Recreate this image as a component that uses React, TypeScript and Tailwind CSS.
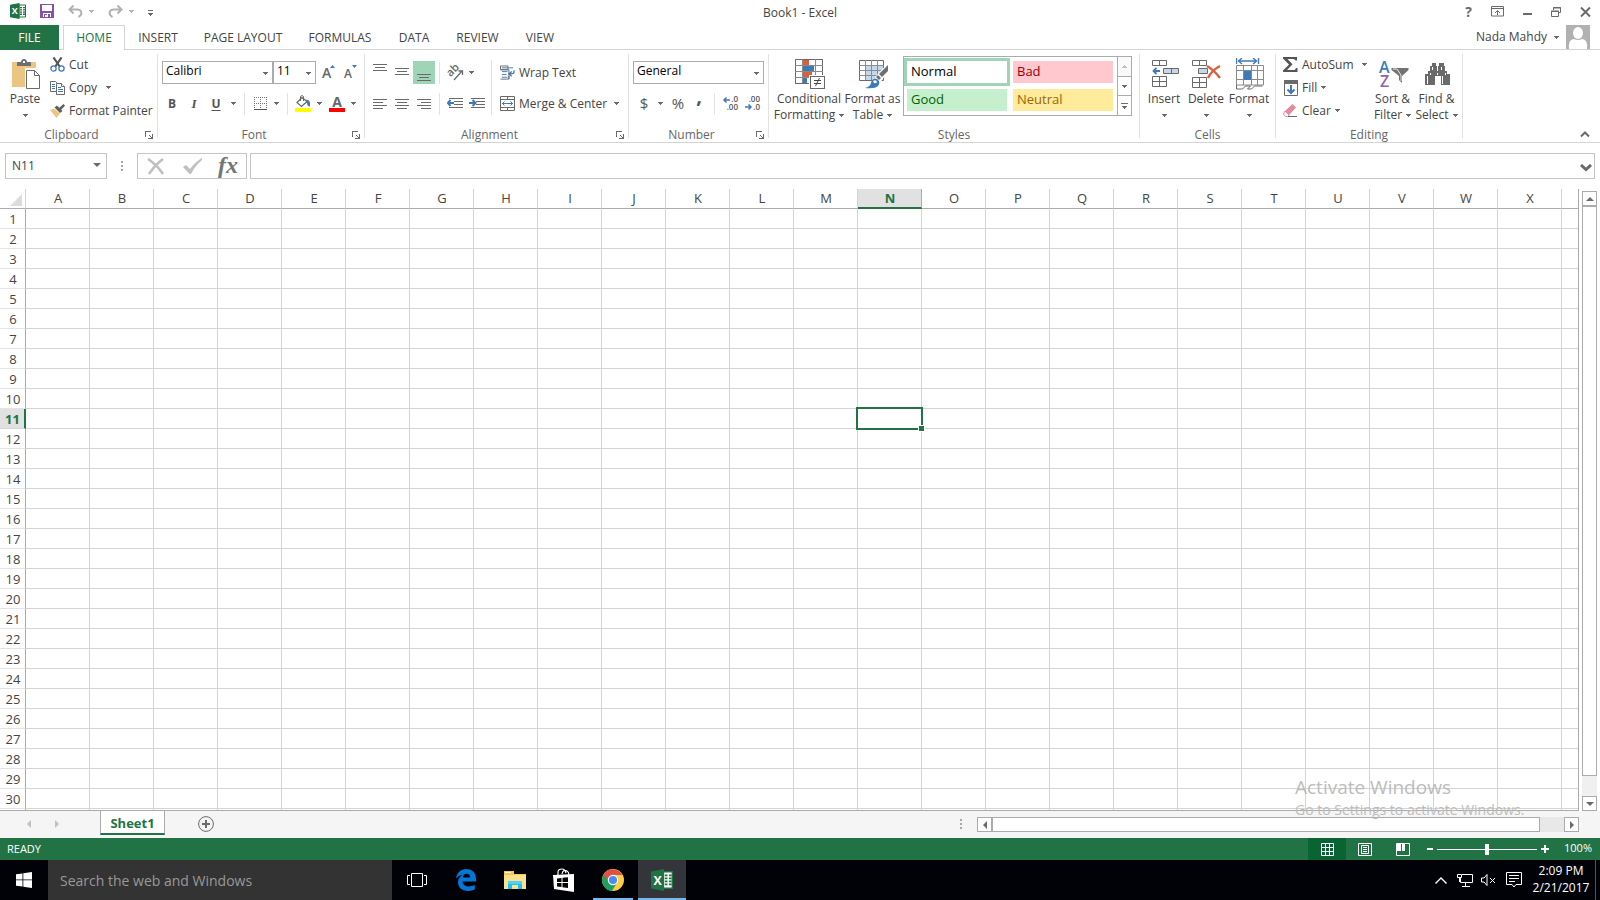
import type { ReactNode } from "react";

const GREY = "#6a6a6a";
const BLUE = "#3f7ab8";

/* ---------- shared pieces ---------- */

function Caret({ className = "" }: { className?: string }) {
  return (
    <svg width="5" height="3" viewBox="0 0 5 3" className={`shrink-0 ${className}`} shapeRendering="crispEdges" aria-hidden="true">
      <path d="M0 0h5v1h-1v1h-1v1h-1v-1h-1v-1h-1z" fill={GREY} />
    </svg>
  );
}

function Divider({ className = "h-[22px]" }: { className?: string }) {
  return <span className={`w-px shrink-0 bg-[#e1e1e1] ${className}`} />;
}

function Launcher({ label }: { label: string }) {
  return (
    <button aria-label={label} className="flex h-3 w-3 items-center justify-center">
      <svg width="8" height="8" viewBox="0 0 8 8" shapeRendering="crispEdges" fill={GREY} aria-hidden="true">
        <path d="M0 0h6v1H1v5H0zM7 3h1v5H3V7h3V6H5V5H4V4h1v1h1v1h1z" />
      </svg>
    </button>
  );
}

function Group({ name, width, launcher, children }: { name: string; width: string; launcher?: boolean; children: ReactNode }) {
  return (
    <section aria-label={name} className={`flex shrink-0 flex-col border-r border-[#e1e1e1] ${width}`}>
      <div className="flex h-[74px] shrink-0 items-start">{children}</div>
      <div className="flex h-[14px] shrink-0 items-center text-center text-[12px] leading-[14px] text-[#666]">
        <span className="flex-1">{name}</span>
        {launcher && (
          <span className="w-[14px]">
            <Launcher label={`${name} settings`} />
          </span>
        )}
      </div>
    </section>
  );
}

function BigButton({ icon, lines, width, inlineCaret }: { icon: ReactNode; lines: string[]; width: string; inlineCaret?: boolean }) {
  return (
    <button className={`flex shrink-0 flex-col items-center pt-[3px] text-[12px] leading-4 whitespace-nowrap ${width}`}>
      <span className="flex h-[34px] items-center justify-center pl-[2px]">{icon}</span>
      {lines.map((line, i) => (
        <span key={line} className="flex items-center gap-1">
          {line}
          {inlineCaret && i === lines.length - 1 && <Caret />}
        </span>
      ))}
      {!inlineCaret && (
        <span className="flex h-4 items-center">
          <Caret />
        </span>
      )}
    </button>
  );
}

function SmallButton({ icon, label, caret, caretGap = "ml-1" }: { icon: ReactNode; label: string; caret?: boolean; caretGap?: string }) {
  return (
    <button className="flex h-[23px] items-center text-[12px] whitespace-nowrap">
      <span className="mr-1 flex w-[15px] shrink-0 justify-center">{icon}</span>
      {label}
      {caret && <Caret className={caretGap} />}
    </button>
  );
}

function Tool({ label, width = "w-[22px]", active, children }: { label: string; width?: string; active?: boolean; children: ReactNode }) {
  return (
    <button aria-label={label} className={`flex h-[23px] shrink-0 items-center justify-center ${width} ${active ? "bg-[#9fd5b7]" : ""}`}>
      {children}
    </button>
  );
}

function Combo({ label, value, options, width }: { label: string; value: string; options: string[]; width: string }) {
  return (
    <div className={`relative h-[23px] shrink-0 border border-[#ababab] ${width}`}>
      <select aria-label={label} defaultValue={value} className="block h-full w-full appearance-none bg-transparent pb-1 pl-[3px] text-[12px] leading-[17px] text-black outline-none">
        {options.map((o) => (
          <option key={o}>{o}</option>
        ))}
      </select>
      <Caret className="pointer-events-none absolute top-[10px] right-[4px]" />
    </div>
  );
}

/* ---------- icons ---------- */

function ExcelLogo({ size }: { size: number }) {
  return (
    <svg width={size} height={size} viewBox="0 0 16 16" aria-hidden="true">
      <path d="M9 2h6.5v12H9z" fill="#fff" stroke="#217346" />
      <path d="M10 4h2v1.3h-2zM13 4h2v1.3h-2zM10 6.2h2v1.3h-2zM13 6.2h2v1.3h-2zM10 8.4h2v1.3h-2zM13 8.4h2v1.3h-2zM10 10.6h2v1.3h-2zM13 10.6h2v1.3h-2z" fill="#217346" />
      <path d="M0 1.800L9.500 0v16L0 14.200z" fill="#217346" />
      <text x="4.800" y="11.300" fontSize="9" fontWeight="700" fill="#fff" textAnchor="middle" fontFamily="Open Sans, sans-serif">X</text>
    </svg>
  );
}

function SaveIcon() {
  return (
    <svg width="14" height="14" viewBox="0 0 14 14" shapeRendering="crispEdges" aria-hidden="true">
      <path d="M0 0h14v14H0z" fill="#8652a8" />
      <path d="M2 1h10v6H2zM3 9h8v4H3z" fill="#fff" />
      <path d="M4 10h3v3H4zM8 10h2v3H8z" fill="#8652a8" />
      <path d="M5 11h2v2H5z" fill="#fff" />
    </svg>
  );
}

function UndoIcon({ flip }: { flip?: boolean }) {
  return (
    <svg width="15" height="13" viewBox="0 0 15 13" fill="none" stroke="#b1b1b1" strokeWidth="2" className={flip ? "-scale-x-100" : ""} aria-hidden="true">
      <path d="M5.500 0.500L1.500 4.500l4 4M2 4.500h7c5.500 0 5.500 5.500 1.500 7.500" />
    </svg>
  );
}

function PasteIcon() {
  return (
    <svg width="29" height="31" viewBox="0 0 29 31" aria-hidden="true">
      <path d="M0 3h24v25H0z" fill="#ecc681" />
      <path d="M5 7V3h4c0-4 6-4 6 0h4v4z" fill="#6f6f6f" />
      <path d="M11 2h2v2h-2z" fill="#fff" />
      <path d="M13 9h11l5 5v17H13z" fill="#fff" />
      <path d="M14.500 11.500h8l5 5v13h-13zM22.500 11.500v5h5" fill="#fff" stroke={GREY} />
    </svg>
  );
}

function CutIcon() {
  return (
    <svg width="15" height="15" viewBox="0 0 15 15" fill="none" aria-hidden="true">
      <path d="M3.500 0.500l6.500 9.500M11.500 0.500L5 10" stroke="#555" strokeWidth="2.200" />
      <circle cx="3.500" cy="11.500" r="2.600" stroke={BLUE} strokeWidth="1.300" />
      <circle cx="11.500" cy="11.500" r="2.600" stroke={BLUE} strokeWidth="1.300" />
    </svg>
  );
}

function CopyIcon() {
  return (
    <svg width="15" height="14" viewBox="0 0 15 14" fill="#fff" aria-hidden="true">
      <path d="M0.500 0.500h5l2 2v8h-7z" stroke={GREY} />
      <path d="M2 3.500h3M2 5.500h3M2 7.500h3" stroke={BLUE} />
      <path d="M6.500 2.500h5l3 3v8h-8z" stroke={GREY} />
      <path d="M11.500 2.500v3h3" stroke={GREY} />
      <path d="M8 6.500h3M8 8.500h5M8 10.500h5" stroke={BLUE} />
    </svg>
  );
}

function PainterIcon() {
  return (
    <svg width="15" height="14" viewBox="0 0 15 14" aria-hidden="true">
      <path d="M0 6l4-1.500 6 5L6.500 14z" fill="#ecc681" />
      <path d="M4.500 3.500L7 1.500l5.500 5.500-2.500 2z" fill="#5f5f5f" />
      <path d="M9 4l4.500-4L15 1.800 11 6z" fill="#5f5f5f" />
    </svg>
  );
}

function GrowIcon({ up }: { up?: boolean }) {
  return (
    <svg width="14" height="16" viewBox="0 0 14 16" className="overflow-visible" aria-hidden="true">
      <text x="0" y="13" fontSize={up ? 14 : 12} fontWeight="600" fill="#666" fontFamily="Open Sans, sans-serif">A</text>
      <path d={up ? "M8 3h5L10.500 0z" : "M8 0h5L10.500 3z"} fill={BLUE} />
    </svg>
  );
}

function BordersIcon() {
  return (
    <svg width="13" height="13" viewBox="0 0 13 13" aria-hidden="true">
      <path d="M0 0.500h13M0 6.500h13M0.500 0v12M6.500 0v12M12.500 0v12" stroke="#777" strokeDasharray="1 1" />
      <path d="M0 12.500h13" stroke="#555" />
    </svg>
  );
}

function BucketIcon() {
  return (
    <svg width="16" height="17" viewBox="0 0 16 17" fill="none" aria-hidden="true">
      <path d="M7 2.500L2 7.500l4.500 4L12 6.500z" stroke="#666" strokeWidth="1.200" fill="#fff" />
      <path d="M5.500 6V1.500q1.500-2 3 0V6" stroke="#666" />
      <path d="M11 4.500q5 0 4 7-3 0-3-4z" fill={BLUE} />
      <path d="M0 13h16v4H0z" fill="#ff0" />
    </svg>
  );
}

function FontColorIcon() {
  return (
    <svg width="16" height="17" viewBox="0 0 16 17" className="overflow-visible" aria-hidden="true">
      <text x="8" y="12" fontSize="14" fontWeight="700" fill="#666" textAnchor="middle" fontFamily="Open Sans, sans-serif">A</text>
      <path d="M0 13h16v4H0z" fill="#f00" />
    </svg>
  );
}

/* Each entry is [x, width] of one stroke; strokes are three pixels apart. */
function LinesIcon({ rows, top = 0, height = 13 }: { rows: [number, number][]; top?: number; height?: number }) {
  return (
    <svg width="14" height={height} viewBox={`0 0 14 ${height}`} shapeRendering="crispEdges" fill={GREY} aria-hidden="true">
      {rows.map(([x, w], i) => (
        <rect key={i} x={x} y={top + i * 3} width={w} height="1" />
      ))}
    </svg>
  );
}

const vertical: [number, number][] = [[0, 14], [2, 10], [0, 14]];
const left: [number, number][] = [[0, 14], [0, 10], [0, 14], [0, 10]];
const center: [number, number][] = [[0, 14], [2, 10], [0, 14], [2, 10]];
const right: [number, number][] = [[0, 14], [4, 10], [0, 14], [4, 10]];

function OrientIcon() {
  return (
    <svg width="17" height="16" viewBox="0 0 17 16" className="overflow-visible" aria-hidden="true">
      <text x="1" y="10" fontSize="11" fontWeight="600" fill="#666" fontFamily="Open Sans, sans-serif" transform="rotate(-45 5 8)">ab</text>
      <path d="M7 15L15 6M11.500 6H15.500V10" stroke={GREY} strokeWidth="1.300" fill="none" />
    </svg>
  );
}

function IndentIcon({ more }: { more?: boolean }) {
  return (
    <svg width="16" height="12" viewBox="0 0 16 12" aria-hidden="true">
      <path d="M2 0.500h14M7 3.500h9M7 6.500h9M2 9.500h14" stroke={GREY} shapeRendering="crispEdges" />
      <path d={more ? "M0 5h6M3.500 2L6.500 5l-3 3" : "M7 5H1M3.500 2L0.800 5l2.700 3"} stroke={BLUE} strokeWidth="2" fill="none" />
    </svg>
  );
}

function WrapIcon() {
  return (
    <svg width="16" height="16" viewBox="0 0 16 16" fill="none" aria-hidden="true">
      <path d="M0.500 0.500h8v4h-8zM0.500 4.500h9v10h-9" stroke={GREY} />
      <path d="M9.500 11v3.500" stroke={GREY} />
      <path d="M2 2.500h12M2 6.500h6M2 9.500h5M2 12.500h6" stroke={BLUE} />
      <path d="M15 5v2q0 2-4 2M12.500 6.500L9.500 9l3 2.500" stroke={BLUE} strokeWidth="1.400" />
    </svg>
  );
}

function MergeIcon() {
  return (
    <svg width="15" height="15" viewBox="0 0 15 15" fill="none" aria-hidden="true">
      <path d="M0.500 0.500h14v14H0.500zM0 3.500h15M0 11.500h15M7.500 0v3M7.500 12v3" stroke={GREY} />
      <path d="M2 7.500h11M4.500 5.500l-2 2 2 2M10.500 5.500l2 2-2 2" stroke={BLUE} />
    </svg>
  );
}

function DecimalIcon({ less }: { less?: boolean }) {
  return (
    <svg width="15" height="15" viewBox="0 0 15 15" className="overflow-visible" aria-hidden="true">
      <g fontSize="8" fontWeight="600" fill="#555" fontFamily="Open Sans, sans-serif" textAnchor="end">
        <text x="15" y="6">{less ? ".00" : ".0"}</text>
        <text x="15" y="14">{less ? ".0" : ".00"}</text>
      </g>
      <path d={less ? "M0 11h6M3.500 8.500L6 11l-2.500 2.500" : "M7 4H1M3.500 1.500L1 4l2.500 2.500"} stroke={BLUE} strokeWidth="1.500" fill="none" />
    </svg>
  );
}

function ConditionalIcon() {
  return (
    <svg width="31" height="31" viewBox="0 0 31 31" shapeRendering="crispEdges" aria-hidden="true">
      <path d="M0.500 0.500h27v24H0.500z" fill="#fff" stroke={GREY} />
      <path d="M7.500 0v24M20.500 0v24M0 6.500h28M0 12.500h28M0 18.500h28" stroke="#8a8a8a" />
      <path d="M8 1h6v5H8zM8 13h9v5H8z" fill="#d9603b" />
      <path d="M8 7h11v5H8zM8 19h4v5H8z" fill={BLUE} />
      <path d="M14 16h17v15H14z" fill="#fff" />
      <path d="M15.500 17.500h14v12h-14z" fill="#fff" stroke={GREY} />
      <path d="M19 21.500h7M19 24.500h7" stroke="#444" />
      <path d="M24.500 19l-4 8" stroke="#444" shapeRendering="auto" />
    </svg>
  );
}

function TableFormatIcon() {
  return (
    <svg width="30" height="29" viewBox="0 0 30 29" aria-hidden="true">
      <path d="M0.500 0.500h24v20H0.500z" fill="#fff" stroke={GREY} />
      <path d="M7 6h17v14H7z" fill="#c5d7ec" />
      <path d="M6.500 0v20M12.500 0v20M18.500 0v20M0 5.500h25M0 10.500h25M0 15.500h25" stroke="#8c8c8c" />
      <path d="M29 3L16 17l5 6 9-13z" fill="#fff" />
      <path d="M29 5v6l-6 6-3-3z" fill="#6f6f6f" />
      <path d="M19 15l3 3-2 2-3-3z" fill="#6f6f6f" />
      <path d="M6 28q5-1 6-5 1-5 6-4 4 3 1 7-3 3-13 2z" fill={BLUE} />
      <path d="M14 21q3-2 4 1-1 2-3 1z" fill="#fff" />
    </svg>
  );
}

function InsertIcon() {
  return (
    <svg width="27" height="28" viewBox="0 0 27 28" fill="#fff" aria-hidden="true">
      <path d="M0.500 0.500h14v5H0.500zM7.500 0v5" stroke={GREY} />
      <path d="M11.500 8.500h15v5h-15z" fill="#c5d7ec" stroke={GREY} />
      <path d="M19.500 8v5" stroke={GREY} />
      <path d="M8 11H2M4.500 8L1.500 11l3 3" stroke={BLUE} strokeWidth="1.800" fill="none" />
      <path d="M0.500 16.500h14v10H0.500zM7.500 16v10M0 21.500h15" stroke={GREY} />
    </svg>
  );
}

function DeleteIcon() {
  return (
    <svg width="30" height="28" viewBox="0 0 30 28" fill="#fff" aria-hidden="true">
      <path d="M0.500 0.500h14v5H0.500zM7.500 0v5" stroke={GREY} />
      <path d="M6.500 8.500h9v5h-9z" fill="#c5d7ec" stroke={GREY} />
      <path d="M0.500 17.500h14v10H0.500zM7.500 17v10M0 22.500h15" stroke={GREY} />
      <path d="M15 6q7 4 13 12M28 6q-8 4-12 12" stroke="#d9603b" strokeWidth="2.400" fill="none" />
    </svg>
  );
}

function FormatIcon() {
  return (
    <svg width="28" height="32" viewBox="0 0 28 32" fill="none" aria-hidden="true">
      <path d="M0.500 0v6M22.500 0v6M2 3h19M6 0L2.500 3 6 6M17 0l3.500 3L17 6" stroke={BLUE} strokeWidth="1.400" />
      <path d="M0.500 7.500h27v19.500H0.500zM7.500 7v20M15.500 7v20M21.500 7v20M0 12.500h28M0 21.500h28" stroke="#8a8a8a" />
      <path d="M8 13h7v9H8z" fill={BLUE} />
      <path d="M0.500 27v4h6l3-3h5l-3 3h4l3-3h8" stroke={GREY} />
    </svg>
  );
}

function SumIcon() {
  return (
    <svg width="15" height="15" viewBox="0 0 15 15" aria-hidden="true">
      <path d="M0 0h14v3.500h-1.500Q12 2 10 2H4.500l5 5.200L4 13h7q1.500 0 2-2h1.500V15H0v-1.500L6 7.500 0 1.500z" fill="#555" />
    </svg>
  );
}

function FillIcon() {
  return (
    <svg width="14" height="16" viewBox="0 0 14 16" fill="none" aria-hidden="true">
      <path d="M0.500 0.500h13v15H0.500z" fill="#fff" stroke={GREY} />
      <path d="M0 0h14v4H0z" fill={GREY} />
      <path d="M7 5v8M3.500 9.500L7 13l3.500-3.500" stroke={BLUE} strokeWidth="2" />
    </svg>
  );
}

function EraserIcon() {
  return (
    <svg width="15" height="13" viewBox="0 0 15 13" aria-hidden="true">
      <path d="M9.500 0L13 3.500 6 11 2 7z" fill="#e58a9a" />
      <path d="M2 7l4 4-1.500 1.500H2.500L0.500 10z" fill="#fff" stroke="#e58a9a" />
      <path d="M5 12.500h9" stroke={GREY} />
    </svg>
  );
}

function SortIcon() {
  return (
    <svg width="30" height="29" viewBox="0 0 30 29" className="overflow-visible" aria-hidden="true">
      <g fontSize="16" fontWeight="600" fontFamily="Open Sans, sans-serif">
        <text x="0" y="13" fill={BLUE}>A</text>
        <text x="1" y="27" fill="#9162b5">Z</text>
      </g>
      <path d="M12.500 8h17v2L23 16v7l-3-3v-4l-7.500-6z" fill="#737373" />
      <path d="M14 9h4l4 6v6" stroke="#e8e8e8" fill="none" />
    </svg>
  );
}

function FindIcon() {
  return (
    <svg width="26" height="26" viewBox="0 0 26 26" fill="#6a6a6a" aria-hidden="true">
      <path d="M7 2h4v3h1v5h1V5h1V2h5v3h1v5h2v3h3v11h-9v-9h-6v9H0V13h3v-3h2V5h2z" />
      <path d="M2.500 15v8M5.500 12v2M17.500 15v8M20.500 12v2M12.500 12v2M7.500 6v3M16.500 6v3" stroke="#fff" />
    </svg>
  );
}

/* ---------- title bar and tabs ---------- */

function TitleBar() {
  return (
    <header className="grid h-[25px] shrink-0 grid-cols-[1fr_auto_1fr] items-center">
      <div className="flex items-center pb-[3px] pl-[10px]">
        <ExcelLogo size={16} />
        <button aria-label="Save" className="ml-[14px]"><SaveIcon /></button>
        <button aria-label="Undo" className="ml-[14px] flex items-center gap-[6px]"><UndoIcon /><Caret className="opacity-50" /></button>
        <button aria-label="Redo" className="ml-[14px] flex items-center gap-[6px]"><UndoIcon flip /><Caret className="opacity-50" /></button>
        <button aria-label="Customize toolbar" className="ml-[14px] flex flex-col items-center gap-[2px] pt-[3px]">
          <span className="h-px w-[5px] bg-[#6a6a6a]" />
          <Caret />
        </button>
      </div>
      <h1 className="text-[12px]">Book1 - Excel</h1>
      <div className="flex items-center justify-end gap-[19px] pr-[9px] pb-[2px]">
        <button aria-label="Help" className="text-[14px] leading-4 font-bold text-[#6a6a6a]">?</button>
        <button aria-label="Ribbon display options">
          <svg width="13" height="11" viewBox="0 0 13 11" fill="none" stroke={GREY} aria-hidden="true">
            <path d="M0.500 0.500h12v9.500H0.500zM0 2.500h13M6.500 9V5M4 7l2.500-2.500L9 7" />
          </svg>
        </button>
        <button aria-label="Minimize" className="flex h-[11px] w-[9px] items-center pt-1"><span className="h-[2px] w-full bg-[#6a6a6a]" /></button>
        <button aria-label="Restore">
          <svg width="10" height="10" viewBox="0 0 10 10" fill="none" stroke={GREY} aria-hidden="true">
            <path d="M2.500 3V0.500h7v5H8M0.500 4.500h7v5h-7zM0 4h8M2 1h8" />
          </svg>
        </button>
        <button aria-label="Close">
          <svg width="11" height="10" viewBox="0 0 11 10" stroke={GREY} strokeWidth="2" aria-hidden="true">
            <path d="M1 0.500l9 9M10 0.500l-9 9" />
          </svg>
        </button>
      </div>
    </header>
  );
}

const tabs = [
  { name: "INSERT", width: "w-[66px]" },
  { name: "PAGE LAYOUT", width: "w-[104px]" },
  { name: "FORMULAS", width: "w-[90px]" },
  { name: "DATA", width: "w-[58px]" },
  { name: "REVIEW", width: "w-[69px]" },
  { name: "VIEW", width: "w-[56px]" },
];

function TabRow() {
  return (
    <nav className="flex h-[25px] shrink-0 text-[12px]">
      <button className="w-[59px] bg-[#217346] text-white">FILE</button>
      <span className="w-1 border-b border-[#d4d4d4]" />
      <button className="w-[62px] border border-b-0 border-[#d4d4d4] text-[#217346]">HOME</button>
      <div className="flex flex-1 border-b border-[#d4d4d4]">
        {tabs.map((t) => (
          <button key={t.name} className={`pt-[2px] whitespace-nowrap ${t.width}`}>{t.name}</button>
        ))}
        <button className="ml-auto flex items-center gap-[7px] pr-[10px] whitespace-nowrap">
          Nada Mahdy
          <Caret />
          <svg width="24" height="24" viewBox="0 0 24 24" aria-hidden="true">
            <path d="M0 0h24v24H0z" fill="#b1b1b1" />
            <ellipse cx="12" cy="8" rx="5" ry="6" fill="#fff" />
            <path d="M3 24q-1-10 5-10 4 2 8 0 6 0 5 10z" fill="#fff" />
          </svg>
        </button>
      </div>
    </nav>
  );
}

/* ---------- ribbon ---------- */

function StylesGallery() {
  return (
    <div className="mt-[2px] ml-[2px] flex h-[60px] w-[229px] shrink-0 border border-[#ababab] text-[13px]">
      <div className="grid flex-1 grid-cols-[106px_100px] grid-rows-[28px_22px] gap-x-[3px] gap-y-[3px] pt-[1px]">
        <button className="border-[3px] border-[#9fd5b7] pb-[2px] pl-1 text-left leading-5 text-black">Normal</button>
        <button className="my-[3px] bg-[#ffc7ce] pb-[2px] pl-1 text-left leading-5 text-[#9c0006]">Bad</button>
        <button className="mx-[3px] bg-[#c6efce] pb-[2px] pl-1 text-left leading-5 text-[#006100]">Good</button>
        <button className="bg-[#ffeb9c] pb-[2px] pl-1 text-left leading-5 text-[#9c6500]">Neutral</button>
      </div>
      <div className="flex w-[14px] flex-col border-l border-[#ababab]">
        <button aria-label="Previous styles" className="flex flex-1 items-center justify-center bg-[#fafafa]"><Caret className="rotate-180 opacity-40" /></button>
        <button aria-label="Next styles" className="flex flex-1 items-center justify-center border-y border-[#ababab]"><Caret /></button>
        <button aria-label="More styles" className="flex flex-1 flex-col items-center justify-center gap-[2px]">
          <span className="h-px w-[7px] bg-[#6a6a6a]" />
          <Caret />
        </button>
      </div>
    </div>
  );
}

function Ribbon() {
  return (
    <div className="flex h-[93px] shrink-0 border-b border-[#d4d4d4] pt-1 pb-1">
      <Group name="Clipboard" width="w-[158px]" launcher>
        <BigButton icon={<PasteIcon />} lines={["Paste"]} width="w-[50px]" />
        <div className="-mt-px">
          <SmallButton icon={<CutIcon />} label="Cut" />
          <SmallButton icon={<CopyIcon />} label="Copy" caret caretGap="ml-[9px]" />
          <SmallButton icon={<PainterIcon />} label="Format Painter" />
        </div>
      </Group>

      <Group name="Font" width="w-[207px]" launcher>
        <div className="flex flex-col gap-2 pt-[7px] pl-1">
          <div className="flex items-center">
            <Combo label="Font" value="Calibri" options={["Calibri", "Arial"]} width="w-[111px]" />
            <Combo label="Font size" value="11" options={["11", "12"]} width="w-[43px]" />
            <Tool label="Increase font size" width="ml-[2px] w-[22px]"><GrowIcon up /></Tool>
            <Tool label="Decrease font size"><GrowIcon /></Tool>
          </div>
          <div className="flex items-center text-[12px] text-[#555]">
            <Tool label="Bold" width="w-5"><b>B</b></Tool>
            <Tool label="Italic" width="w-6"><i className="font-['Liberation_Serif',serif] text-[13px] font-bold">I</i></Tool>
            <Tool label="Underline" width="w-5"><b className="underline underline-offset-2">U</b></Tool>
            <Tool label="Underline style" width="w-[14px]"><Caret /></Tool>
            <Divider className="mx-1 h-[22px]" />
            <Tool label="Borders"><BordersIcon /></Tool>
            <Tool label="Border style" width="w-[10px]"><Caret /></Tool>
            <Divider className="mr-1 ml-[6px] h-[22px]" />
            <Tool label="Fill color"><BucketIcon /></Tool>
            <Tool label="Fill palette" width="w-[10px]"><Caret /></Tool>
            <Tool label="Font color" width="w-[26px]"><FontColorIcon /></Tool>
            <Tool label="Font palette" width="w-[6px]"><Caret /></Tool>
          </div>
        </div>
      </Group>

      <Group name="Alignment" width="w-[264px]" launcher>
        <div className="flex flex-col gap-2 pt-[7px] pl-1">
          <div className="flex items-center">
            <Tool label="Top align"><LinesIcon rows={vertical} top={0} height={17} /></Tool>
            <Tool label="Middle align"><LinesIcon rows={vertical} top={3} height={15} /></Tool>
            <Tool label="Bottom align" active><LinesIcon rows={vertical} top={9} height={16} /></Tool>
            <Divider className="mx-1 h-[22px]" />
            <Tool label="Orientation"><OrientIcon /></Tool>
            <Tool label="Orientation menu" width="w-[10px]"><Caret /></Tool>
          </div>
          <div className="flex items-center">
            <Tool label="Align left"><LinesIcon rows={left} height={10} /></Tool>
            <Tool label="Center"><LinesIcon rows={center} height={10} /></Tool>
            <Tool label="Align right"><LinesIcon rows={right} height={10} /></Tool>
            <Divider className="mx-1 h-[22px]" />
            <Tool label="Decrease indent"><IndentIcon /></Tool>
            <Tool label="Increase indent"><IndentIcon more /></Tool>
          </div>
        </div>
        <Divider className="mt-[6px] ml-[3px] h-[55px]" />
        <div className="flex flex-col gap-2 pt-[7px] pl-2">
          <SmallButton icon={<WrapIcon />} label="Wrap Text" />
          <SmallButton icon={<MergeIcon />} label="Merge & Center" caret caretGap="ml-[7px]" />
        </div>
      </Group>

      <Group name="Number" width="w-[140px]" launcher>
        <div className="flex flex-col gap-2 pt-[7px] pl-1">
          <Combo label="Number format" value="General" options={["General", "Number"]} width="w-[131px]" />
          <div className="flex items-center text-[15px] text-[#555]">
            <Tool label="Accounting format">$</Tool>
            <Tool label="Currency menu" width="w-[11px]"><Caret /></Tool>
            <Tool label="Percent style" width="w-6">%</Tool>
            <Tool label="Comma style" width="w-[18px]"><span className="h-[23px] text-[20px] leading-[8px] font-bold">,</span></Tool>
            <Divider className="mx-[6px] h-[22px]" />
            <Tool label="Increase decimal" width="w-[18px]"><DecimalIcon /></Tool>
            <Tool label="Decrease decimal" width="ml-1 w-[18px]"><DecimalIcon less /></Tool>
          </div>
        </div>
      </Group>

      <Group name="Styles" width="w-[371px]">
        <BigButton icon={<ConditionalIcon />} lines={["Conditional", "Formatting"]} width="ml-[5px] w-[70px]" inlineCaret />
        <BigButton icon={<TableFormatIcon />} lines={["Format as", "Table"]} width="w-[57px]" inlineCaret />
        <StylesGallery />
      </Group>

      <Group name="Cells" width="w-[136px]">
        <BigButton icon={<InsertIcon />} lines={["Insert"]} width="ml-1 w-10" />
        <BigButton icon={<DeleteIcon />} lines={["Delete"]} width="w-11" />
        <BigButton icon={<FormatIcon />} lines={["Format"]} width="w-[42px]" />
      </Group>

      <Group name="Editing" width="w-[187px]">
        <div className="-mt-px w-[94px] shrink-0 pl-[7px]">
          <SmallButton icon={<SumIcon />} label="AutoSum" caret caretGap="ml-2" />
          <SmallButton icon={<FillIcon />} label="Fill" caret />
          <SmallButton icon={<EraserIcon />} label="Clear" caret />
        </div>
        <BigButton icon={<SortIcon />} lines={["Sort &", "Filter"]} width="w-[45px]" inlineCaret />
        <BigButton icon={<FindIcon />} lines={["Find &", "Select"]} width="w-[43px]" inlineCaret />
      </Group>

      <button aria-label="Collapse ribbon" className="mt-auto mr-[10px] mb-[1px] ml-auto">
        <svg width="10" height="6" viewBox="0 0 10 6" fill="none" stroke={GREY} strokeWidth="2" aria-hidden="true">
          <path d="M1 5.500l4-4 4 4" />
        </svg>
      </button>
    </div>
  );
}

/* ---------- formula bar ---------- */

function FormulaBar() {
  return (
    <div className="flex h-[46px] shrink-0 items-center pr-[5px] pl-[5px]">
      <div className="relative h-[26px] w-[102px] border border-[#c6c6c6]">
        <input aria-label="Name box" defaultValue="N11" className="block h-full w-full pb-[2px] pl-[6px] text-[12px] outline-none" />
        <svg width="8" height="4" viewBox="0 0 8 4" className="pointer-events-none absolute top-[9px] right-[5px]" aria-hidden="true"><path d="M0 0h8L4 4z" fill={GREY} /></svg>
      </div>
      <svg width="3" height="11" viewBox="0 0 3 11" className="mr-[13px] ml-[14px]" aria-hidden="true"><path d="M0 0h2v2H0zM0 4h2v2H0zM0 8h2v2H0z" fill="#a6a6a6" /></svg>
      <div className="flex h-[26px] w-[110px] items-center border border-[#c6c6c6]">
        <button aria-label="Cancel" className="flex w-9 justify-center">
          <svg width="18" height="17" viewBox="0 0 18 17" fill="none" stroke="#c0c0c0" strokeWidth="2.600" aria-hidden="true"><path d="M1 1q9 6 15 15M16 1Q8 7 2 16" /></svg>
        </button>
        <button aria-label="Enter" className="flex w-9 justify-center">
          <svg width="19" height="16" viewBox="0 0 19 16" fill="#c0c0c0" aria-hidden="true"><path d="M0 9l3-2 4 4Q12 4 19 0v2Q12 8 8 16H6.500z" /></svg>
        </button>
        <button aria-label="Insert function" className="flex w-9 justify-center pb-[2px] font-['Liberation_Serif',serif] text-[24px] leading-6 font-bold text-[#757575] italic">fx</button>
      </div>
      <div className="relative ml-[3px] h-[26px] flex-1 border border-[#c6c6c6]">
        <input aria-label="Formula" className="block h-full w-full px-1 text-[12px] outline-none" />
        <button aria-label="Expand formula bar" className="absolute top-[10px] right-[2px]">
          <svg width="12" height="8" viewBox="0 0 12 8" fill="none" stroke={GREY} strokeWidth="3" aria-hidden="true"><path d="M1 1l5 4.500L11 1" /></svg>
        </button>
      </div>
    </div>
  );
}

/* ---------- worksheet ---------- */

const columns = "ABCDEFGHIJKLMNOPQRSTUVWX".split("");
const rows = Array.from({ length: 31 }, (_, i) => i + 1);
const activeColumn = "N";
const activeRow = 11;

function Sheet() {
  return (
    <div className="min-w-0 flex-1 overflow-hidden border-r border-b border-[#ababab]">
      <table className="w-full table-fixed border-separate border-spacing-0 text-[13px] leading-none text-[#444]">
        <colgroup>
          <col className="w-[26px]" />
          {columns.map((c) => (
            <col key={c} className="w-16" />
          ))}
          <col />
        </colgroup>
        <thead>
          <tr className="h-5">
            <th aria-label="Select all" className="border-r border-b border-[#ababab] border-r-[#d4d4d4] p-0">
              <svg width="12" height="12" viewBox="0 0 12 12" className="mt-[3px] ml-[10px]" aria-hidden="true"><path d="M12 0v12H0z" fill="#dcdcdc" /></svg>
            </th>
            {columns.map((c) => (
              <th
                key={c}
                scope="col"
                className={
                  c === activeColumn
                    ? "border-r border-b-2 border-r-[#ababab] border-b-[#217346] bg-[#e1e1e1] p-0 pl-px font-bold text-[#217346]"
                    : "border-r border-b border-r-[#d4d4d4] border-b-[#ababab] p-0 pl-px font-normal"
                }
              >
                {c}
              </th>
            ))}
            <th className="border-b border-[#ababab] p-0" />
          </tr>
        </thead>
        <tbody>
          {rows.map((r) => (
            <tr key={r} className="h-5">
              <th
                scope="row"
                className={
                  r === activeRow
                    ? "border-r-2 border-b border-r-[#217346] border-b-[#d4d4d4] bg-[#e1e1e1] p-0 pt-[2px] pl-px font-bold text-[#217346]"
                    : "border-r border-b border-r-[#ababab] border-b-[#e4e4e4] p-0 pt-[2px] pl-px font-normal"
                }
              >
                {r}
              </th>
              {columns.map((c) => (
                <td key={c} className="relative border-r border-b border-[#d4d4d4] p-0">
                  {c === activeColumn && r === activeRow && (
                    <span className="absolute -top-[2px] -right-[2px] -bottom-[2px] -left-[2px] z-10 border-2 border-[#217346]">
                      <span className="absolute -right-[4px] -bottom-[4px] h-[7px] w-[7px] border border-white bg-[#217346]" />
                    </span>
                  )}
                </td>
              ))}
              <td className="border-b border-[#d4d4d4] p-0" />
            </tr>
          ))}
        </tbody>
      </table>
    </div>
  );
}

const arrows = {
  up: "M4 0l4 4H0z",
  down: "M0 0h8L4 4z",
  left: "M4 0v8L0 4z",
  right: "M0 0l4 4-4 4z",
};

function ScrollButton({ direction }: { direction: keyof typeof arrows }) {
  const flat = direction === "up" || direction === "down";
  return (
    <button aria-label={`Scroll ${direction}`} className="flex h-[15px] w-[15px] shrink-0 items-center justify-center border border-[#ababab] bg-white">
      <svg width={flat ? 8 : 4} height={flat ? 4 : 8} viewBox={flat ? "0 0 8 4" : "0 0 4 8"} aria-hidden="true"><path d={arrows[direction]} fill={GREY} /></svg>
    </button>
  );
}

function SheetTabs() {
  return (
    <div className="flex h-[27px] shrink-0 bg-[#f5f5f5]">
      <div className="flex w-[100px] items-start gap-6 pt-[9px] pl-[27px]">
        <button aria-label="Previous sheet"><svg width="4" height="8" viewBox="0 0 4 8" aria-hidden="true"><path d={arrows.left} fill="#c0c0c0" /></svg></button>
        <button aria-label="Next sheet"><svg width="4" height="8" viewBox="0 0 4 8" aria-hidden="true"><path d={arrows.right} fill="#c0c0c0" /></svg></button>
      </div>
      <button className="h-6 w-[65px] border-x border-b-2 border-x-[#ababab] border-b-[#217346] bg-white pt-[2px] text-[13px] leading-5 font-bold text-[#217346]">Sheet1</button>
      <button aria-label="New sheet" className="mt-[5px] ml-[33px] h-4 w-4">
        <svg width="16" height="16" viewBox="0 0 16 16" fill="none" stroke={GREY} aria-hidden="true">
          <circle cx="8" cy="8" r="7.400" />
          <path d="M8 4v8M4 8h8" strokeWidth="2" />
        </svg>
      </button>
      <svg width="2" height="10" viewBox="0 0 2 10" className="mt-2 mr-[15px] ml-auto" aria-hidden="true"><path d="M0 0h2v2H0zM0 4h2v2H0zM0 8h2v2H0z" fill="#a6a6a6" /></svg>
      <div className="mt-[6px] mr-[21px] flex h-[15px] w-[602px] bg-[#e8e8e8]">
        <ScrollButton direction="left" />
        <span className="h-full w-[548px] border border-[#ababab] bg-white" />
        <span className="flex-1" />
        <ScrollButton direction="right" />
      </div>
    </div>
  );
}

/* ---------- status bar ---------- */

function StatusBar() {
  return (
    <footer className="flex h-[22px] shrink-0 items-center bg-[#217346] pr-2 text-[11px] text-white">
      <span className="pl-[7px]">READY</span>
      <button aria-label="Normal view" className="ml-auto flex h-full w-[38px] items-center justify-center bg-[#0a6332]">
        <svg width="13" height="13" viewBox="0 0 13 13" fill="none" stroke="#fff" aria-hidden="true"><path d="M0.500 0.500h12v12H0.500zM4.500 0v13M8.500 0v13M0 4.500h13M0 8.500h13" /></svg>
      </button>
      <button aria-label="Page layout view" className="flex w-[38px] justify-center">
        <svg width="14" height="13" viewBox="0 0 14 13" fill="none" stroke="#fff" aria-hidden="true"><path d="M0.500 0.500h13v12H0.500zM3.500 2.500h7v8h-7zM5 4.500h4M5 6.500h4M5 8.500h4" /></svg>
      </button>
      <button aria-label="Page break view" className="flex w-[38px] justify-center">
        <svg width="14" height="13" viewBox="0 0 14 13" fill="none" stroke="#fff" aria-hidden="true"><path d="M0.500 0.500h13v12H0.500z" /><path d="M1 1h4v7H1zM6 1h3v7H6z" fill="#fff" stroke="none" /></svg>
      </button>
      <button aria-label="Zoom out" className="ml-[5px] flex h-full w-[10px] items-center"><span className="h-[2px] w-[6px] bg-white" /></button>
      <input
        type="range"
        aria-label="Zoom"
        defaultValue={50}
        className="h-[11px] w-[100px] appearance-none bg-transparent [&::-webkit-slider-runnable-track]:h-px [&::-webkit-slider-runnable-track]:bg-white [&::-webkit-slider-thumb]:-mt-[5px] [&::-webkit-slider-thumb]:h-[11px] [&::-webkit-slider-thumb]:w-1 [&::-webkit-slider-thumb]:appearance-none [&::-webkit-slider-thumb]:bg-white"
      />
      <button aria-label="Zoom in" className="ml-1">
        <svg width="8" height="8" viewBox="0 0 8 8" aria-hidden="true"><path d="M3 0h2v3h3v2H5v3H3V5H0V3h3z" fill="#fff" /></svg>
      </button>
      <span className="w-[43px] pb-[2px] text-right">100%</span>
    </footer>
  );
}

/* ---------- taskbar ---------- */

function EdgeIcon() {
  return (
    <svg width="20" height="22" viewBox="0 0 20 22" aria-hidden="true">
      <path d="M0 9.500C1 3.500 5 0 10.300 0 16.500 0 20 4.300 20 10v2.500H6.500c.2 3.300 3 5 6.300 5 2.400 0 4.200-.6 6-1.700v4.400C17 21.400 14.500 22 11.800 22 6 22 2 18.500 2 13.300 2 9.800 4 7 7 5.700 4 6 1.500 7.500 0 9.500zM6.800 8.600h7.400c0-2.500-1.300-3.900-3.500-3.900-2.200 0-3.600 1.500-3.900 3.900z" fill="#0078d7" />
    </svg>
  );
}

function FolderIcon() {
  return (
    <svg width="22" height="19" viewBox="0 0 22 19" aria-hidden="true">
      <path d="M0 0h10v3h12v15H0z" fill="#f5c94e" />
      <path d="M0 4h22v14H0z" fill="#fbe08f" />
      <path d="M1 1h6v1H1z" fill="#fff" />
      <path d="M4 10h14v8h-4v-4H8v4H4z" fill="#20c0f0" />
      <path d="M4 10h14v3H4z" fill="#4dd2f8" />
    </svg>
  );
}

function StoreIcon() {
  return (
    <svg width="22" height="24" viewBox="0 0 22 24" aria-hidden="true">
      <path d="M5 7V4q0-3 4-3 3 0 4 4M9 6q1-5 5-3 2 1 2 4" fill="none" stroke="#fff" strokeWidth="1.200" />
      <path d="M0 7l21-1v18L1 21z" fill="#fff" />
      <path d="M4 10.500l4.500-.5v4H4zM9.500 9.800L15 9.200V14H9.500zM4 15h4.500v4L4 18.500zM9.500 15H15v5l-5.500-.8z" fill="#000" />
    </svg>
  );
}

function ChromeIcon() {
  return (
    <svg width="22" height="22" viewBox="0 0 22 22" aria-hidden="true">
      <circle cx="11" cy="11" r="11" fill="#ffcd41" />
      <path d="M11 11L1.500 5.500A11 11 0 0 0 10 22l5.200-8.500z" fill="#1da160" />
      <path d="M1.500 5.500A11 11 0 0 1 20.500 6H11v5L6.700 13.500z" fill="#de5246" />
      <circle cx="11" cy="11" r="5.200" fill="#fff" />
      <circle cx="11" cy="11" r="4.100" fill="#4a8bf5" />
    </svg>
  );
}

function Taskbar() {
  return (
    <div className="flex h-10 shrink-0 bg-[#010207] text-white">
      <button aria-label="Start" className="flex w-12 items-center justify-center">
        <svg width="16" height="16" viewBox="0 0 16 16" fill="#fff" aria-hidden="true"><path d="M0 2.300l6.500-.9v6.100H0zM7.300 1.300L16 0v7.500H7.300zM0 8.300h6.500v6.300L0 13.700zM7.300 8.300H16V16l-8.700-1.300z" /></svg>
      </button>
      <input type="search" aria-label="Search" placeholder="Search the web and Windows" className="w-[344px] bg-[#333] px-3 text-[14px] outline-none placeholder:text-[#999]" />
      <div className="flex gap-px pl-px">
        <button aria-label="Task view" className="flex w-12 items-center justify-center">
          <svg width="20" height="14" viewBox="0 0 20 14" fill="none" stroke="#fff" aria-hidden="true"><path d="M4.500 0.500h11v13h-11zM3 2.500H0.500v9H3M17 2.500h2.500v9H17" /></svg>
        </button>
        <button aria-label="Edge" className="flex w-12 items-center justify-center"><EdgeIcon /></button>
        <button aria-label="File Explorer" className="flex w-12 items-center justify-center"><FolderIcon /></button>
        <button aria-label="Store" className="flex w-12 items-center justify-center"><StoreIcon /></button>
        <button aria-label="Chrome" className="flex w-12 flex-col items-center">
          <span className="flex flex-1 items-center pt-[2px]"><ChromeIcon /></span>
          <span className="h-[2px] w-10 bg-[#76b9ed]" />
        </button>
        <button aria-label="Excel" className="flex w-12 flex-col items-center bg-[#33353a]">
          <span className="flex flex-1 items-center pt-[2px]"><ExcelLogo size={22} /></span>
          <span className="h-[2px] w-full bg-[#76b9ed]" />
        </button>
      </div>
      <div className="ml-auto flex items-center">
        <button aria-label="Show hidden icons" className="mr-[10px]">
          <svg width="12" height="7" viewBox="0 0 12 7" fill="none" stroke="#fff" strokeWidth="1.400" aria-hidden="true"><path d="M0.500 6.500L6 1l5.500 5.500" /></svg>
        </button>
        <button aria-label="Network" className="mr-2">
          <svg width="16" height="14" viewBox="0 0 16 14" fill="none" stroke="#fff" aria-hidden="true"><path d="M5 1.500h10.500v8H3.500V5M8.500 10v3M5 13.500h8M0.500 1.500h4v3h-4zM2.500 5v4" /></svg>
        </button>
        <button aria-label="Volume muted" className="mr-[10px]">
          <svg width="15" height="12" viewBox="0 0 15 12" fill="none" stroke="#fff" aria-hidden="true"><path d="M0.500 4H3l3-3.500v11L3 8H0.500zM9 4l5 5M14 4L9 9" /></svg>
        </button>
        <button aria-label="Notifications" className="mr-[10px]">
          <svg width="16" height="16" viewBox="0 0 16 16" fill="none" stroke="#fff" aria-hidden="true"><path d="M0.500 0.500h15v12H10l-2 2.500-2-2.500H0.500zM3 3.500h10M3 6.500h10M3 9.500h6" /></svg>
        </button>
        <button className="w-[58px] pb-[2px] text-center text-[12px] leading-[17px] whitespace-nowrap">
          <span className="block">2:09 PM</span>
          <span className="block">2/21/2017</span>
        </button>
        <span className="mr-1 ml-[5px] h-10 w-px bg-[#555]" />
      </div>
    </div>
  );
}

export default function App() {
  return (
    <div className="relative flex h-screen flex-col overflow-hidden bg-white font-['Open_Sans','Noto_Sans',sans-serif] text-[#444]">
      <TitleBar />
      <TabRow />
      <Ribbon />
      <FormulaBar />
      <main className="flex min-h-0 flex-1">
        <Sheet />
        <div className="flex w-[21px] shrink-0 flex-col items-start pt-[2px] pl-[3px]">
          <ScrollButton direction="up" />
          <div className="flex w-[15px] flex-1 flex-col bg-[#f0f0f0]">
            <span className="mb-5 flex-1 border border-[#ababab] bg-white" />
          </div>
          <ScrollButton direction="down" />
        </div>
      </main>
      <SheetTabs />
      <StatusBar />
      <Taskbar />
      <div className="pointer-events-none absolute right-0 bottom-20 w-[305px] text-[#bcbcbc]">
        <p className="text-[19px] leading-[26px]">Activate Windows</p>
        <p className="text-[14px] leading-5">Go to Settings to activate Windows.</p>
      </div>
    </div>
  );
}
